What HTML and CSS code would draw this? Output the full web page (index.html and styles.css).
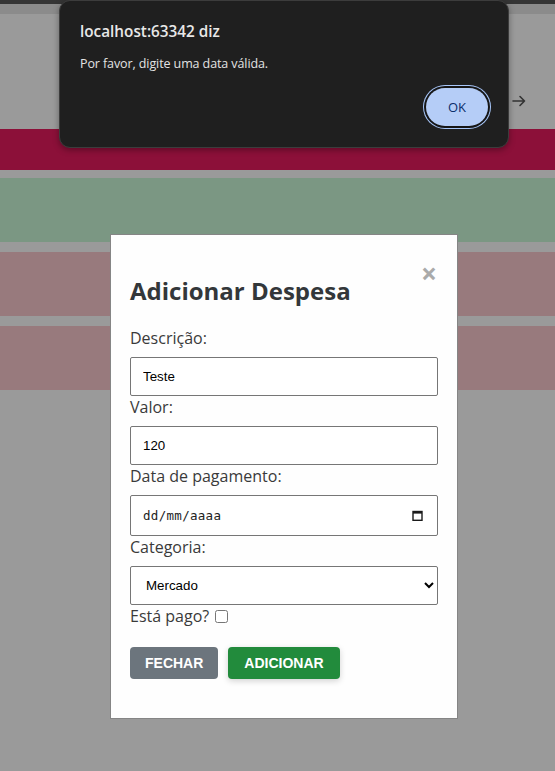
FILE: index.html
```html
<!DOCTYPE html>
<html lang="pt-BR">
<head>
<meta charset="utf-8">
<title>Despesas</title>
<link rel="stylesheet" href="styles.css">
</head>
<body>
  <div class="topline"></div>
  <div class="navbar"></div>
  <header class="header">
    <svg class="arrow" width="14" height="12" viewBox="0 0 14 12" aria-hidden="true">
      <path d="M1 6 H12.5 M8 1.5 L12.5 6 L8 10.5" fill="none" stroke="#333" stroke-width="1.6" stroke-linecap="round" stroke-linejoin="round"/>
    </svg>
  </header>
  <main class="list">
    <div class="band band-crimson"></div>
    <div class="band band-green"></div>
    <div class="band band-pink"></div>
    <div class="band band-pink"></div>
  </main>

  <div class="modal">
    <span class="close">&times;</span>
    <h2 class="modal-title">Adicionar Despesa</h2>
    <form class="form">
      <label class="label" for="desc">Descrição:</label>
      <input class="field" id="desc" type="text" value="Teste">
      <label class="label" for="valor">Valor:</label>
      <input class="field" id="valor" type="text" value="120">
      <label class="label">Data de pagamento:</label>
      <div class="field date-field">
        <span class="date-text">dd/mm/aaaa</span>
        <svg width="11" height="11" viewBox="0 0 11 11" aria-hidden="true">
          <rect x="1" y="1.5" width="9" height="8.8" fill="none" stroke="#1a1a1a" stroke-width="1.4"/>
          <rect x="1" y="1" width="9" height="2.6" fill="#1a1a1a"/>
        </svg>
      </div>
      <label class="label" for="cat">Categoria:</label>
      <select class="field select" id="cat">
        <option>Mercado</option>
      </select>
      <label class="label check-label">Está pago? <input type="checkbox" class="check"></label>
      <div class="actions">
        <button type="button" class="btn btn-gray">FECHAR</button>
        <button type="button" class="btn btn-green">ADICIONAR</button>
      </div>
    </form>
  </div>

  <div class="alert">
    <div class="alert-title">localhost:63342 diz</div>
    <div class="alert-msg">Por favor, digite uma data válida.</div>
    <div class="alert-actions">
      <button type="button" class="alert-ok">OK</button>
    </div>
  </div>
</body>
</html>
```
FILE: styles.css
```css
* { box-sizing: border-box; }

html, body {
  margin: 0;
  padding: 0;
}

body {
  background: #9a9a9a;
  font-family: "Open Sans", "Noto Sans", sans-serif;
  width: 555px;
  height: 771px;
  overflow: hidden;
  position: relative;
}

.topline {
  height: 4px;
  background: #353535;
}

.navbar {
  height: 10px;
  background: #8b8b8b;
}

.header {
  height: 115px;
  display: flex;
  justify-content: flex-end;
  align-items: flex-start;
  padding-top: 81px;
  padding-right: 29px;
}

.list {
  display: flex;
  flex-direction: column;
}

.band { width: 100%; }
.band-crimson { height: 41px; background: #8c1039; margin-bottom: 8px; }
.band-green { height: 64px; background: #7b9783; margin-bottom: 10px; }
.band-pink { height: 64px; background: #987a7d; margin-bottom: 10px; }

/* Modal */
.modal {
  position: absolute;
  left: 110px;
  top: 234px;
  width: 348px;
  background: #fefefe;
  border: 1px solid #858585;
  padding: 20px 19px 39px 19px;
}

.close {
  position: absolute;
  top: 24px;
  right: 20px;
  color: #aaa;
  font-family: "Open Sans", sans-serif;
  font-size: 28px;
  font-weight: 700;
  line-height: 28px;
}

.modal-title {
  margin: 20px 0 20px 0;
  font-size: 24px;
  line-height: 32px;
  font-weight: 700;
  color: #33373a;
}

.form {
  display: flex;
  flex-direction: column;
}

.label {
  display: block;
  font-size: 16px;
  line-height: 22px;
  color: #3a3a3a;
  margin-bottom: 8px;
}

.field {
  display: block;
  width: 100%;
  height: 39px;
  margin: 0;
  padding: 0 12px;
  border: 1px solid #767676;
  border-radius: 2px;
  background: #fff;
  font-family: "Liberation Sans", Arial, sans-serif;
  font-size: 13.33px;
  color: #000;
}

.date-field {
  height: 41px;
  display: flex;
  align-items: center;
  justify-content: space-between;
  padding: 0 14px 0 12px;
}

.date-text {
  font-family: "DejaVu Sans Mono", "Liberation Mono", monospace;
  font-size: 12.5px;
  color: #222;
  letter-spacing: 0.3px;
}

.select {
  padding: 0 8px 0 11px;
}

.check-label {
  margin-bottom: 0;
}

.check {
  width: 13px;
  height: 13px;
  margin: 0 0 0 2px;
  vertical-align: -1px;
}

.actions {
  display: flex;
  gap: 10px;
  margin-top: 20px;
}

.btn {
  height: 32px;
  padding: 0 16px;
  border: none;
  border-radius: 4px;
  color: #fff;
  font-family: "Liberation Sans", Arial, sans-serif;
  font-size: 14px;
  font-weight: 700;
}

.btn-gray {
  background: #6c757d;
  padding: 0 15px;
}
.btn-green {
  background: #228b3c;
  box-shadow: 0 2px 6px rgba(0, 0, 0, 0.18);
}

/* Alert dialog */
.alert {
  position: absolute;
  left: 59px;
  top: 0;
  width: 450px;
  height: 148px;
  background: #1f1f1f;
  border: 1px solid #3c3c3c;
  border-radius: 11px;
  box-shadow: 0 2px 6px rgba(0, 0, 0, 0.35);
  padding: 20px 20px 0 20px;
  display: flex;
  flex-direction: column;
}

.alert-title {
  font-family: "Open Sans", sans-serif;
  font-weight: 600;
  font-size: 15.3px;
  line-height: 20px;
  color: #e8e8e8;
}

.alert-msg {
  margin-top: 14px;
  font-family: "Open Sans", sans-serif;
  font-size: 12.5px;
  line-height: 18px;
  color: #e3e3e3;
  letter-spacing: -0.1px;
}

.alert-actions {
  display: flex;
  justify-content: flex-end;
  margin-top: 15px;
}

.alert-ok {
  width: 62px;
  height: 38px;
  border: none;
  border-radius: 19px;
  background: #b5cdf7;
  color: #0b2d6b;
  font-family: "Open Sans", sans-serif;
  font-size: 13px;
  box-shadow: 0 0 0 2px #161616, 0 0 0 3px #a8c7fa;
}
```
